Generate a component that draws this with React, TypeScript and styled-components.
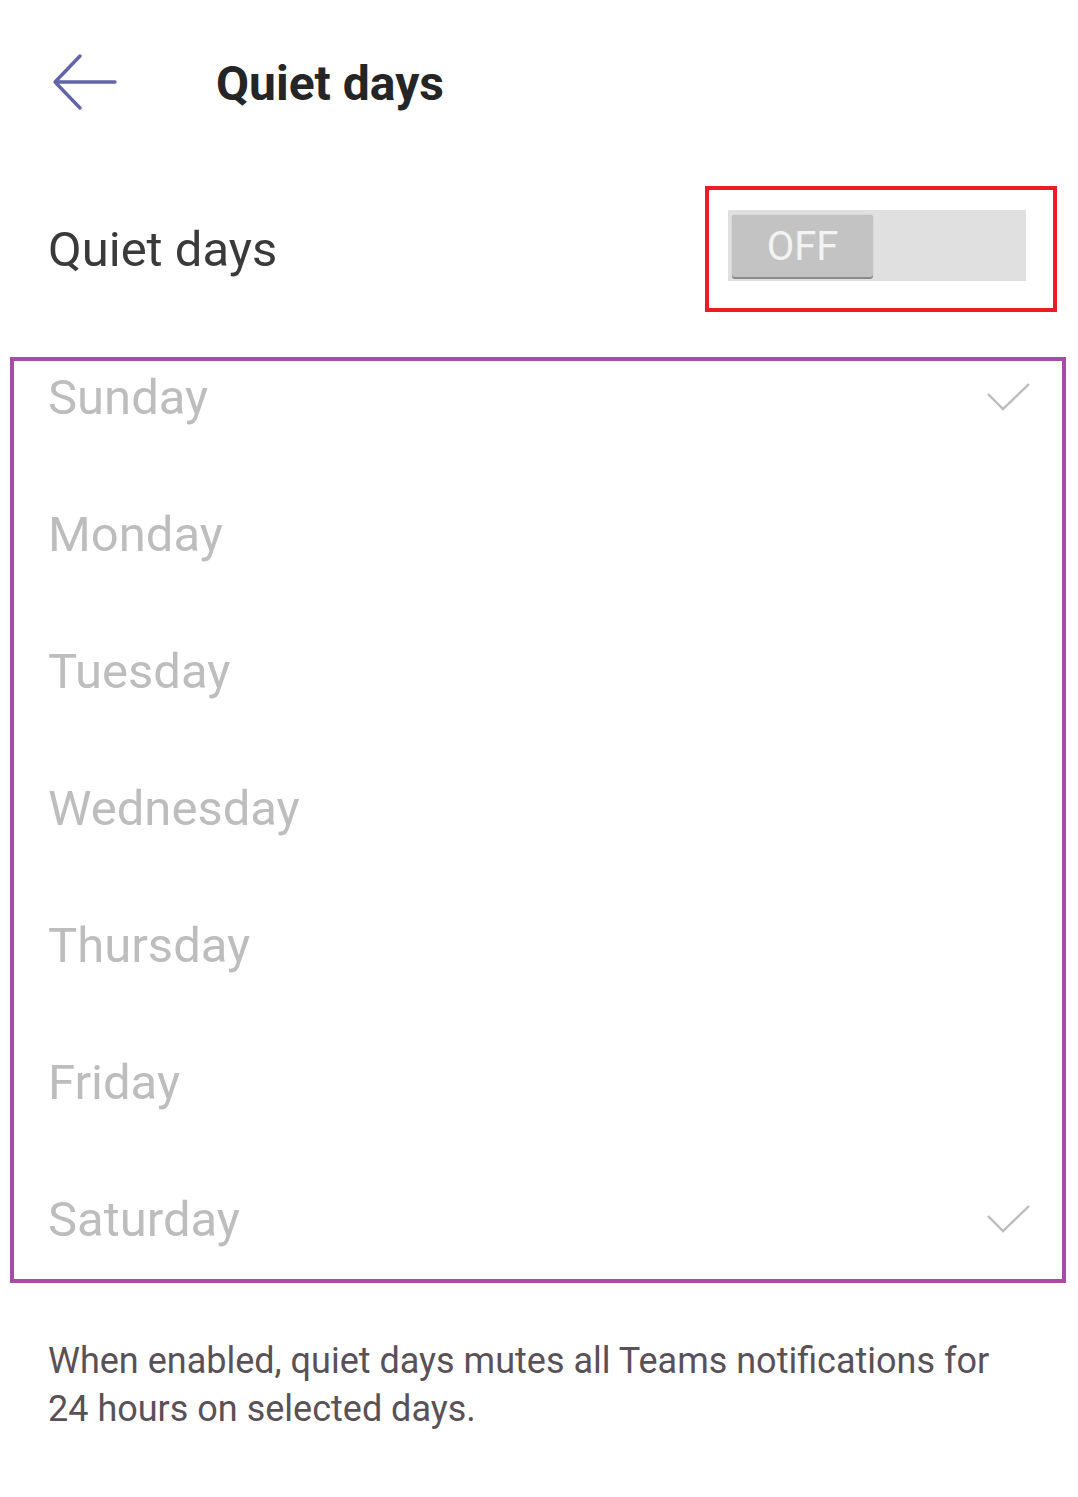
import styled, { createGlobalStyle } from "styled-components";

const GlobalStyle = createGlobalStyle`
  html, body {
    margin: 0;
    padding: 0;
    background: #ffffff;
  }
  body {
    font-family: Roboto, "Liberation Sans", Arial, sans-serif;
  }
`;

const Page = styled.div`
  width: 1078px;
  height: 1497px;
  background: #ffffff;
  overflow: hidden;
`;

const Header = styled.header`
  height: 166px;
  display: flex;
  align-items: center;
  padding-left: 52px;
  box-sizing: border-box;
`;

const BackButton = styled.button`
  border: none;
  background: none;
  padding: 0;
  display: flex;
  cursor: pointer;
`;

const Title = styled.h1`
  margin: 0 0 0 98px;
  font-size: 48px;
  font-weight: 700;
  color: #252525;
`;

const SettingRow = styled.div`
  display: flex;
  align-items: center;
  justify-content: space-between;
  padding: 20px 21px 0 48px;
`;

const Label = styled.span`
  font-size: 49px;
  color: #3a3a3a;
`;

const Highlight = styled.div<{ $color: string }>`
  border: 4px solid ${({ $color }) => $color};
  box-sizing: border-box;
`;

const ToggleBox = styled(Highlight)`
  width: 352px;
  height: 126px;
  padding: 20px 27px 27px 19px;
`;

const Track = styled.div`
  height: 71px;
  background: #e0e0e0;
  display: flex;
  align-items: flex-start;
  padding: 5px 4px 0;
  box-sizing: border-box;
`;

const Thumb = styled.div`
  width: 141px;
  height: 62px;
  background: #c3c3c3;
  border-radius: 3px;
  box-shadow: 0 2px 0 #8a8a8a, 0 0 1px #9a9a9a;
  display: flex;
  align-items: center;
  justify-content: center;
  color: #f3f3f3;
  font-size: 40px;
`;

const DaysBox = styled(Highlight)`
  margin: 45px 12px 0 10px;
  height: 926px;
  overflow: hidden;
`;

const DayList = styled.ul`
  list-style: none;
  margin: -32px 0 0;
  padding: 0;
`;

const Day = styled.li`
  height: 137px;
  display: flex;
  align-items: center;
  justify-content: space-between;
  padding: 0 31px 0 34px;
  font-size: 49px;
  color: #bdbdbd;
`;

const Note = styled.p`
  margin: 54px 60px 0 48px;
  font-size: 36px;
  line-height: 48px;
  color: #5a5057;
`;

const days = [
  { name: "Sunday", checked: true },
  { name: "Monday", checked: false },
  { name: "Tuesday", checked: false },
  { name: "Wednesday", checked: false },
  { name: "Thursday", checked: false },
  { name: "Friday", checked: false },
  { name: "Saturday", checked: true },
];

function BackArrow() {
  return (
    <svg width="66" height="60" viewBox="0 0 66 60" fill="none">
      <path
        d="M63 29H3M28 3L3 29L28 55"
        stroke="#6264a7"
        strokeWidth="3.4"
        strokeLinecap="round"
        strokeLinejoin="round"
      />
    </svg>
  );
}

function Check() {
  return (
    <svg width="44" height="30" viewBox="0 0 44 30" fill="none">
      <path d="M1 11L16 26L42 1" stroke="#bdbdbd" strokeWidth="2.4" />
    </svg>
  );
}

function App() {
  return (
    <Page>
      <GlobalStyle />
      <Header>
        <BackButton aria-label="Back">
          <BackArrow />
        </BackButton>
        <Title>Quiet days</Title>
      </Header>
      <SettingRow>
        <Label>Quiet days</Label>
        <ToggleBox $color="#ed1c24">
          <Track>
            <Thumb>OFF</Thumb>
          </Track>
        </ToggleBox>
      </SettingRow>
      <DaysBox $color="#a64ca6">
        <DayList>
          {days.map((day) => (
            <Day key={day.name}>
              {day.name}
              {day.checked && <Check />}
            </Day>
          ))}
        </DayList>
      </DaysBox>
      <Note>
        When enabled, quiet days mutes all Teams notifications for 24 hours on
        selected days.
      </Note>
    </Page>
  );
}

export default App;
